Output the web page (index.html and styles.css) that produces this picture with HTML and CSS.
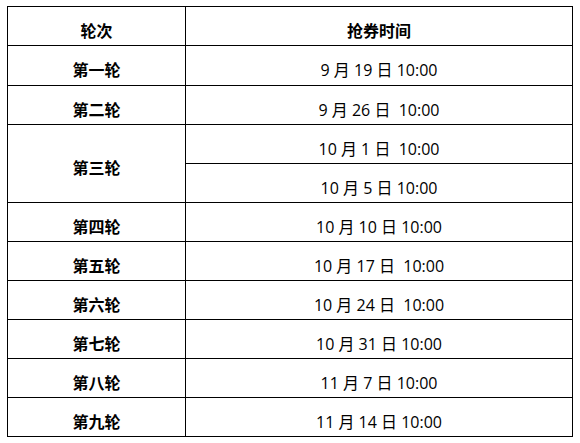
FILE: index.html
```html
<!DOCTYPE html>
<html lang="zh-CN">
<head>
<meta charset="utf-8">
<link rel="stylesheet" href="styles.css">
</head>
<body>
<div class="page">
<table class="schedule">
  <thead>
    <tr class="row-head"><th class="round">轮次</th><th class="time">抢券时间</th></tr>
  </thead>
  <tbody>
    <tr class="row-first"><td class="round">第一轮</td><td class="time">9 月 19 日 10:00</td></tr>
    <tr><td class="round">第二轮</td><td class="time">9 月 26 日  10:00</td></tr>
    <tr><td class="round" rowspan="2">第三轮</td><td class="time">10 月 1 日  10:00</td></tr>
    <tr><td class="time">10 月 5 日 10:00</td></tr>
    <tr><td class="round">第四轮</td><td class="time">10 月 10 日 10:00</td></tr>
    <tr><td class="round">第五轮</td><td class="time">10 月 17 日  10:00</td></tr>
    <tr><td class="round">第六轮</td><td class="time">10 月 24 日  10:00</td></tr>
    <tr><td class="round">第七轮</td><td class="time">10 月 31 日 10:00</td></tr>
    <tr><td class="round">第八轮</td><td class="time">11 月 7 日 10:00</td></tr>
    <tr><td class="round">第九轮</td><td class="time">11 月 14 日 10:00</td></tr>
  </tbody>
</table>
</div>
</body>
</html>
```
FILE: styles.css
```css
html, body {
  margin: 0;
  padding: 0;
  background: #fff;
}
.page {
  padding: 6px 7px;
}
.schedule {
  border-collapse: collapse;
  width: 566px;
  table-layout: fixed;
  font-family: "Open Sans", "Noto Sans CJK SC", sans-serif;
  font-size: 16px;
  color: #000;
}
.schedule th,
.schedule td {
  border: 1px solid #000;
  text-align: center;
  vertical-align: middle;
  padding: 9px 0 0 0;
  height: 29px;
  line-height: 20px;
  white-space: pre;
}
.schedule .round {
  width: 177px;
  font-weight: bold;
}
.schedule th.time {
  font-weight: bold;
}
.schedule td.time {
  font-weight: normal;
}
.row-first td {
  height: 30px;
}
```
